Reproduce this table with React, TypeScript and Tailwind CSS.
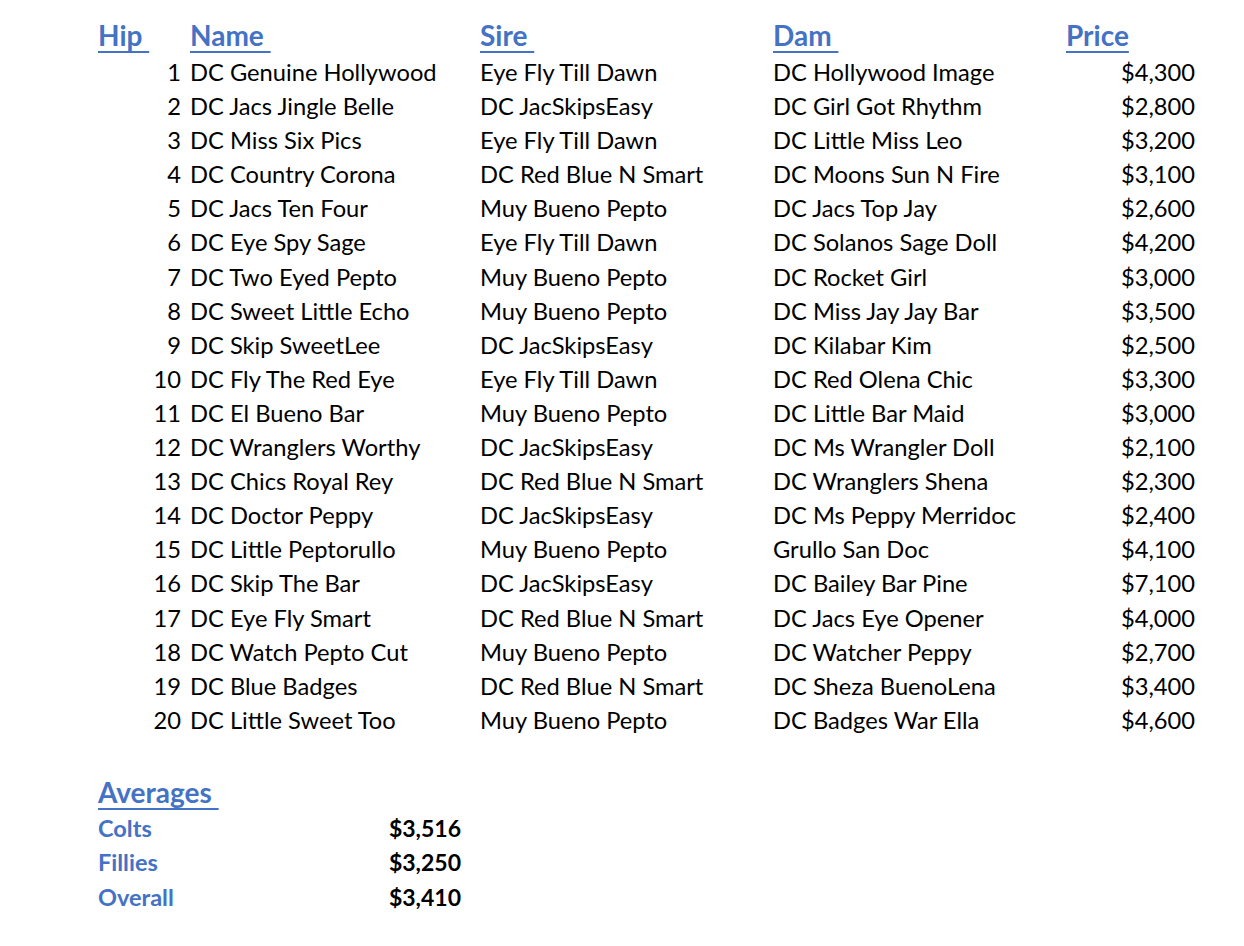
const horses = [
  [1, "DC Genuine Hollywood", "Eye Fly Till Dawn", "DC Hollywood Image", "$4,300"],
  [2, "DC Jacs Jingle Belle", "DC JacSkipsEasy", "DC Girl Got Rhythm", "$2,800"],
  [3, "DC Miss Six Pics", "Eye Fly Till Dawn", "DC Little Miss Leo", "$3,200"],
  [4, "DC Country Corona", "DC Red Blue N Smart", "DC Moons Sun N Fire", "$3,100"],
  [5, "DC Jacs Ten Four", "Muy Bueno Pepto", "DC Jacs Top Jay", "$2,600"],
  [6, "DC Eye Spy Sage", "Eye Fly Till Dawn", "DC Solanos Sage Doll", "$4,200"],
  [7, "DC Two Eyed Pepto", "Muy Bueno Pepto", "DC Rocket Girl", "$3,000"],
  [8, "DC Sweet Little Echo", "Muy Bueno Pepto", "DC Miss Jay Jay Bar", "$3,500"],
  [9, "DC Skip SweetLee", "DC JacSkipsEasy", "DC Kilabar Kim", "$2,500"],
  [10, "DC Fly The Red Eye", "Eye Fly Till Dawn", "DC Red Olena Chic", "$3,300"],
  [11, "DC El Bueno Bar", "Muy Bueno Pepto", "DC Little Bar Maid", "$3,000"],
  [12, "DC Wranglers Worthy", "DC JacSkipsEasy", "DC Ms Wrangler Doll", "$2,100"],
  [13, "DC Chics Royal Rey", "DC Red Blue N Smart", "DC Wranglers Shena", "$2,300"],
  [14, "DC Doctor Peppy", "DC JacSkipsEasy", "DC Ms Peppy Merridoc", "$2,400"],
  [15, "DC Little Peptorullo", "Muy Bueno Pepto", "Grullo San Doc", "$4,100"],
  [16, "DC Skip The Bar", "DC JacSkipsEasy", "DC Bailey Bar Pine", "$7,100"],
  [17, "DC Eye Fly Smart", "DC Red Blue N Smart", "DC Jacs Eye Opener", "$4,000"],
  [18, "DC Watch Pepto Cut", "Muy Bueno Pepto", "DC Watcher Peppy", "$2,700"],
  [19, "DC Blue Badges", "DC Red Blue N Smart", "DC Sheza BuenoLena", "$3,400"],
  [20, "DC Little Sweet Too", "Muy Bueno Pepto", "DC Badges War Ella", "$4,600"],
];

const averages = [
  ["Colts", "$3,516"],
  ["Fillies", "$3,250"],
  ["Overall", "$3,410"],
];

// header style, blue bold with the Excel-like underline
const head = "font-bold text-[28px] leading-[40px] text-[#4472c4] underline decoration-2 underline-offset-[5px] whitespace-pre";

export default function App() {
  return (
    <div className="min-h-[946px] bg-white font-['Lato','Open_Sans',sans-serif] text-black pl-[98px] pt-[15px]">
      <div className="grid grid-cols-[83px_9px_290px_293px_293px_129px] leading-[34.1px] text-[23.7px] whitespace-nowrap">
        <div className={head}>{"Hip "}</div>
        <div />
        <div className={head}>{"Name "}</div>
        <div className={head}>{"Sire "}</div>
        <div className={head}>{"Dam "}</div>
        <div className={head}>Price</div>
        {horses.map((h) => (
          <div key={h[0]} className="contents">
            <div className="text-right">{h[0]}</div>
            <div />
            <div>{h[1]}</div>
            <div>{h[2]}</div>
            <div>{h[3]}</div>
            <div className="text-right">{h[4]}</div>
          </div>
        ))}
      </div>

      <div className="mt-[35px]">
        <div className={head}>{"Averages "}</div>
        <div className="w-[363px] leading-[34.6px] mt-[-1px]">
          {averages.map(([label, value]) => (
            <div key={label} className="flex justify-between font-bold">
              <span className="text-[23.5px] text-[#4472c4]">{label}</span>
              <span className="text-[23px]">{value}</span>
            </div>
          ))}
        </div>
      </div>
    </div>
  );
}
